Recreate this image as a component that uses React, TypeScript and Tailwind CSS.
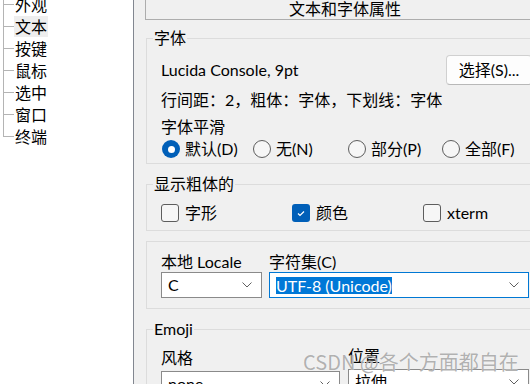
import React from "react";

const treeItems = ["外观", "文本", "按键", "鼠标", "选中", "窗口", "终端"];

const Chevron = () => (
  <svg width="10" height="6" viewBox="0 0 10 6" className="shrink-0">
    <path d="M0.5 0.5 L5 5 L9.5 0.5" fill="none" stroke="#606060" strokeWidth="1" />
  </svg>
);

const Radio = ({ checked, label, w }: { checked?: boolean; label: string; w: string }) => (
  <label className={`flex items-center ${w}`}>
    {checked ? (
      <span className="w-[18px] h-[18px] rounded-full bg-[#005fb8] flex items-center justify-center shrink-0">
        <span className="w-[7px] h-[7px] rounded-full bg-white" />
      </span>
    ) : (
      <span className="w-[18px] h-[18px] rounded-full border border-[#5d5d5d] bg-[#f6f6f6] shrink-0" />
    )}
    <span className="ml-[5px]">{label}</span>
  </label>
);

const Check = ({ checked, label, w }: { checked?: boolean; label: string; w: string }) => (
  <label className={`flex items-center ${w}`}>
    {checked ? (
      <span className="w-[18px] h-[18px] rounded-[3px] bg-[#005fb8] flex items-center justify-center shrink-0">
        <svg width="18" height="18" viewBox="0 0 18 18">
          <path d="M6 9.5 L8 11.5 L12 7.5" fill="none" stroke="white" strokeWidth="1.2" />
        </svg>
      </span>
    ) : (
      <span className="w-[18px] h-[18px] rounded-[3px] border border-[#5d5d5d] bg-[#f6f6f6] shrink-0" />
    )}
    <span className="ml-[6px]">{label}</span>
  </label>
);

export default function App() {
  return (
    <div className="relative flex w-[530px] h-[384px] overflow-hidden bg-[#f0f0f0] text-black text-[16px] leading-[20px] font-['Lato','Noto_Sans_CJK_SC',sans-serif]">
      {/* tree */}
      <div className="w-[134px] shrink-0 bg-white border-r border-[#828790] font-['Noto_Sans_CJK_SC',sans-serif]">
        <div className="-mt-[6px] pl-[3px]">
          {treeItems.map((t, i) => (
            <div key={t} className="flex items-start h-[22px]">
              <div className="w-[11px] h-[22px] shrink-0 flex flex-col">
                <div className="h-[11px] border-l border-b border-[#b4b4b4]" />
                {i < treeItems.length - 1 && <div className="h-[11px] border-l border-[#b4b4b4]" />}
              </div>
              <span className={`h-[21px] px-[1px] leading-[21px] ${t === "文本" ? "bg-[#eeeeee]" : ""}`}>{t}</span>
            </div>
          ))}
        </div>
      </div>

      {/* settings */}
      <div className="ml-[11px] w-[400px] shrink-0">
        <div className="-mt-[6px] h-[26px] border border-[#adadad] flex items-center justify-center font-['Noto_Sans_CJK_SC',sans-serif] pt-[1px]">
          文本和字体属性
        </div>

        <fieldset className="mt-[8px] ml-[1px] border border-[#dcdcdc]">
          <legend className="ml-[6px] px-[1px] leading-[20px]">字体</legend>
          <div className="pl-[14px] pr-[15px] pt-[7px] pb-[4px]">
            <div className="flex items-center justify-between h-[30px]">
              <span>Lucida Console, 9pt</span>
              <button className="w-[86px] h-[30px] rounded-[4px] border border-[#d0d0d0] border-b-[#b8b8b8] bg-[#fdfdfd]">选择(S)...</button>
            </div>
            <div className="mt-[5px] h-[20px]">行间距：2，粗体：字体，下划线：字体</div>
            <div className="mt-[7px] h-[20px]">字体平滑</div>
            <div className="mt-[2px] h-[20px] flex pl-[1px]">
              <Radio checked label="默认(D)" w="w-[91px]" />
              <Radio label="无(N)" w="w-[95px]" />
              <Radio label="部分(P)" w="w-[94px]" />
              <Radio label="全部(F)" w="w-[90px]" />
            </div>
          </div>
        </fieldset>

        <fieldset className="mt-[10px] ml-[1px] border border-[#dcdcdc]">
          <legend className="ml-[6px] px-[1px] leading-[20px]">显示粗体的</legend>
          <div className="pl-[14px] pr-[15px] pt-[9px] pb-[7px]">
            <div className="flex h-[20px]">
              <Check label="字形" w="w-[131px]" />
              <Check checked label="颜色" w="w-[131px]" />
              <Check label="xterm" w="w-[100px]" />
            </div>
          </div>
        </fieldset>

        <div className="mt-[10px] ml-[1px] border border-[#dcdcdc] pl-[14px] pr-[15px] pt-[10px] pb-[10px]">
          <div className="flex gap-[7px]">
            <div className="w-[101px]">
              <div className="h-[20px]">本地 Locale</div>
              <div className="h-[26px] bg-white border border-[#8a8a8a] flex items-center justify-between pl-[6px] pr-[9px]">
                <span>C</span>
                <Chevron />
              </div>
            </div>
            <div className="flex-1">
              <div className="h-[20px]">字符集(C)</div>
              <div className="h-[26px] bg-white border border-[#0078d4] flex items-center justify-between pl-[6px] pr-[9px]">
                <span className="bg-[#0078d7] text-white leading-[17px] h-[17px]">UTF-8 (Unicode)</span>
                <Chevron />
              </div>
            </div>
          </div>
        </div>

        <fieldset className="mt-[10px] ml-[1px] border border-[#dcdcdc]">
          <legend className="ml-[6px] px-[1px] leading-[20px]">Emoji</legend>
          <div className="pl-[14px] pr-[15px] pt-[9px] flex gap-[8px]">
            <div className="w-[179px]">
              <div className="h-[20px]">风格</div>
              <div className="mt-[3px] h-[26px] bg-white border border-[#8a8a8a] flex items-center justify-between pl-[6px] pr-[9px]">
                <span>none</span>
                <Chevron />
              </div>
            </div>
            <div className="flex-1">
              <div className="h-[20px] -mt-[2px] mb-[2px]">位置</div>
              <div className="mt-[3px] h-[26px] bg-white border border-[#8a8a8a] flex items-center justify-between pl-[6px] pr-[9px]">
                <span>拉伸</span>
                <Chevron />
              </div>
            </div>
          </div>
        </fieldset>
      </div>

      <div className="absolute left-[303px] top-[350px] text-[20px] leading-[24px] text-[#9c9c9c]/80 font-['Noto_Sans_CJK_SC',sans-serif] [text-shadow:0_0_1px_#ffffff]">
        CSDN @各个方面都自在
      </div>
    </div>
  );
}
